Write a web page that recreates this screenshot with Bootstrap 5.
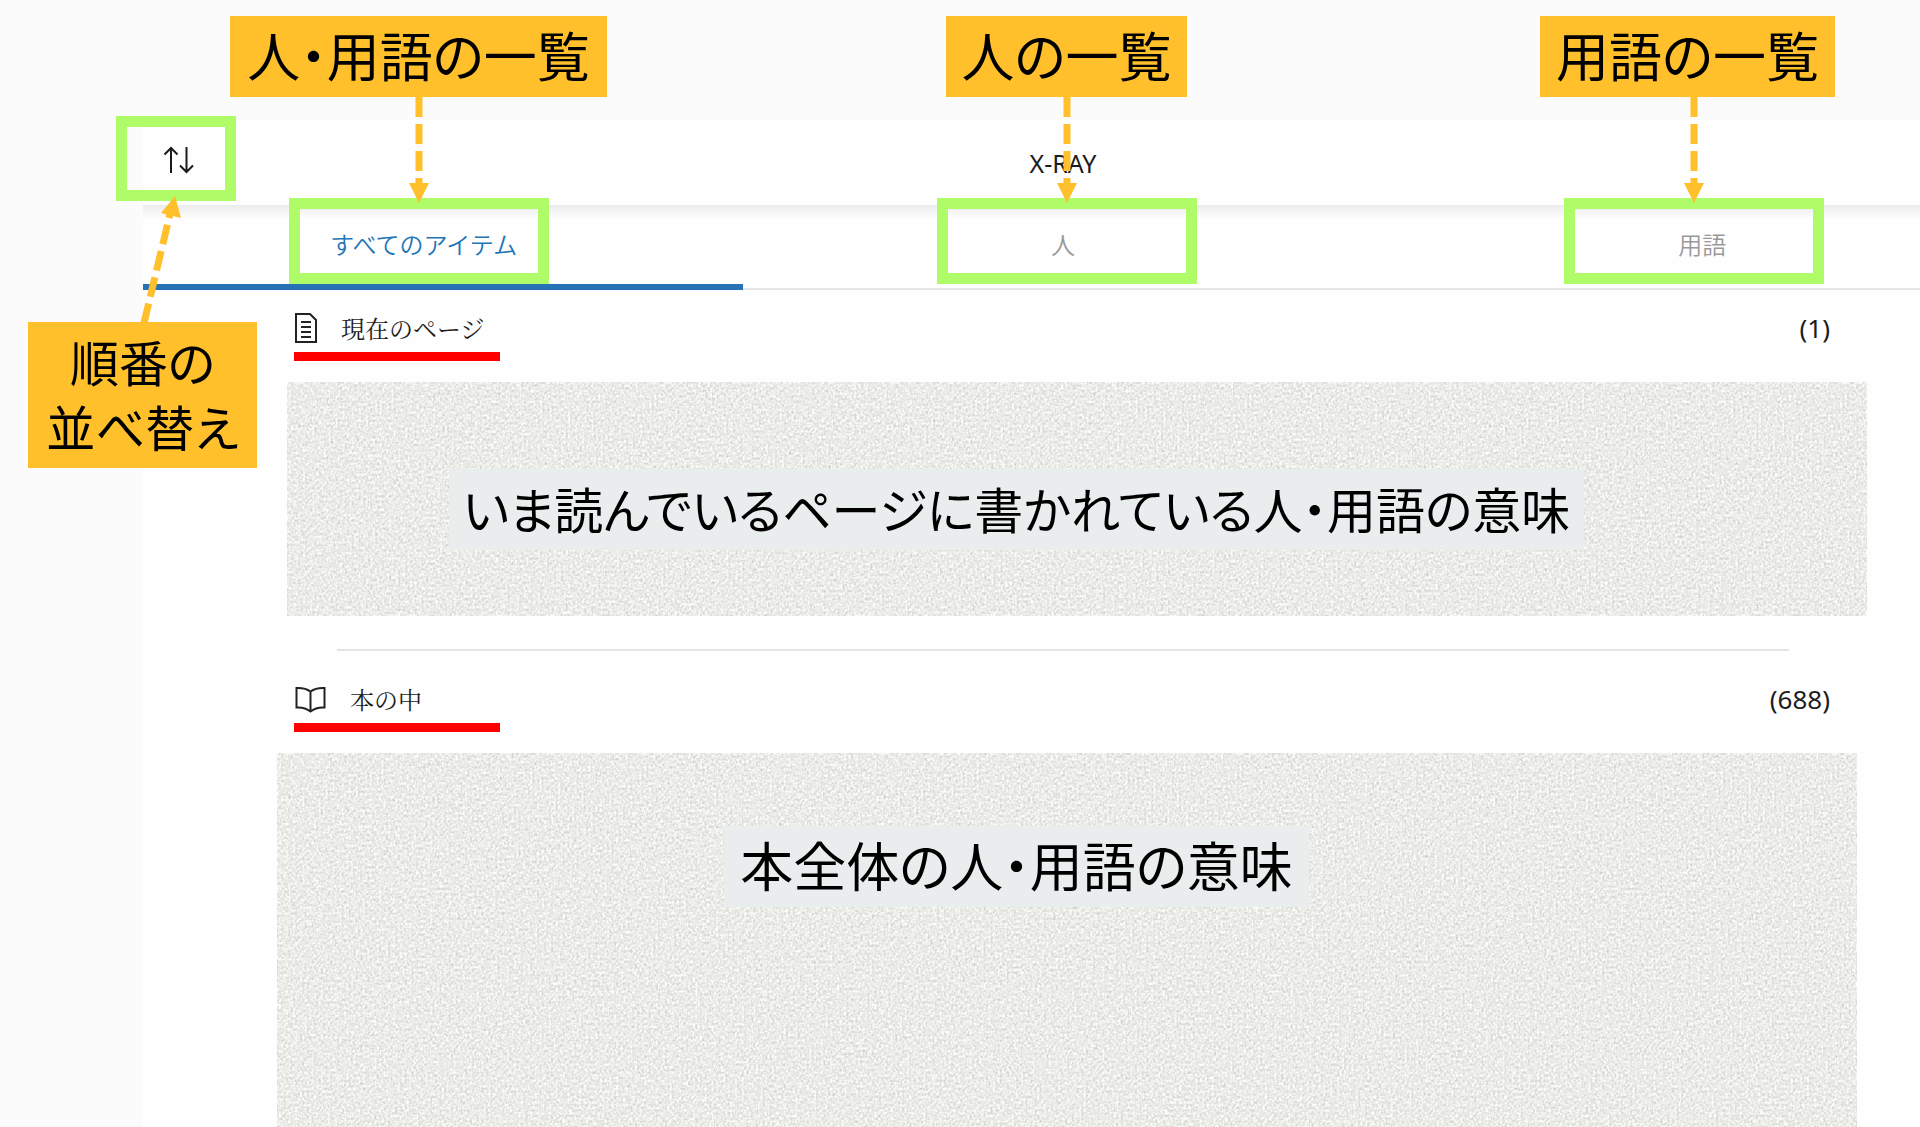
<!DOCTYPE html>
<html lang="ja">
<head>
<meta charset="utf-8">
<meta name="viewport" content="width=device-width, initial-scale=1">
<title>X-RAY</title>
<link href="https://cdn.jsdelivr.net/npm/bootstrap@5.3.0/dist/css/bootstrap.min.css" rel="stylesheet">
<script src="https://cdn.jsdelivr.net/npm/bootstrap@5.3.0/dist/js/bootstrap.bundle.min.js"></script>
<style>
  body { background: #fbfbfb; color: #1c1c1c; font-family: "Noto Sans", "Noto Sans CJK JP", sans-serif; }
  .stage { min-height: 100vh; padding: 120px 0 0 143px; }
  .panel { background: #fefefe; min-height: calc(100vh - 120px); }
  /* the sheet is wider than the visible panel on both sides */
  .sheet-wide { margin-left: -39px; margin-right: -102px; }
  .topbar { height: 85px; }
  .topbar h1 { font-size: 25px; line-height: 28px; }
  .sort-btn { position: absolute; left: 17px; top: 23px; width: 36px; height: 36px; }
  .tabbar { height: 85px; border-bottom: 2px solid #e6e6e6; background: linear-gradient(#ececec, #fefefe 14px); }
  .tabbar a { height: 85px; padding-bottom: 1px; color: #999; font: 350 24px/32px "Noto Sans CJK JP", sans-serif; border-bottom: 6px solid transparent; }
  .tabbar a.active { color: #1f75b5; border-bottom-color: #2672b4; }
  .sec-head { padding: 0 90px 21px 151px; height: 92px; }
  .title-row { height: 40px; margin-bottom: 4px; padding-left: 1px; }
  .title-row h2 { font: 400 24px/32px "Noto Serif CJK JP", "Noto Serif CJK SC", "Noto Sans CJK JP", serif; }
  .title-row span { font-size: 26px; line-height: 32px; }
  .redline { width: 206px; height: 9px; background: #f00; }
  .grain { position: relative; overflow: hidden; background: #eff0ec; }
  .grain > svg { position: absolute; inset: 0; width: 100%; height: 100%; }
  .grain-a { margin: 0 53px 0 144px; height: 234px; padding: 87px 0 0 162px; }
  .grain-b { margin: 0 63px 0 134px; height: 376px; padding: 73px 0 0 447px; }
  .rule { margin: 33px 131px 0 194px; height: 2px; background: #e4e4e4; }
  .sec-book { padding-top: 10px; }
  .big { font: 400 53px/65px "Noto Sans CJK JP", sans-serif; font-feature-settings: "palt"; color: #000; white-space: nowrap; padding: 6px 0 10px; text-align: center; }
  .big-compact { font-size: 49px; }
  .strip { position: relative; background: #e9edee; }
  .strip-a { width: 1135px; }
  .strip-b { width: 585px; }
  .notes { position: absolute; inset: 0; pointer-events: none; }
  .note { position: absolute; background: #ffc02b; top: 16px; }
  .note-all { left: 230px; width: 377px; }
  .note-people { left: 946px; width: 241px; }
  .note-terms { left: 1540px; width: 295px; }
  .note-sort { left: 28px; top: 322px; width: 229px; }
  .ring { position: absolute; border: 11px solid #b0fb68; top: 198px; width: 260px; height: 86px; }
  .ring-sort { left: 116px; top: 116px; width: 120px; height: 85px; }
  .ring-all { left: 289px; }
  .ring-people { left: 937px; }
  .ring-terms { left: 1564px; }
  .arrows { position: absolute; left: 0; top: 0; }
</style>
</head>
<body>
<div class="stage position-relative overflow-hidden">
  <main class="panel overflow-hidden">
    <header class="topbar position-relative">
      <button type="button" class="sort-btn btn p-0 border-0 d-flex" aria-label="並べ替え">
        <svg width="36" height="36" viewBox="0 0 36 36" fill="none" stroke="#1a1a1a" stroke-width="2"><path d="M11 30V5M4.500 11.500L11 5l6.500 6.500M26.500 4v25M20 22.500l6.500 6.500 6.500-6.500"/></svg>
      </button>
      <div class="sheet-wide h-100 d-flex align-items-center justify-content-center">
        <h1 class="m-0 fw-normal">X-RAY</h1>
      </div>
    </header>
    <nav class="tabbar">
      <div class="sheet-wide d-flex">
        <a href="#" class="active d-flex flex-fill w-100 align-items-center justify-content-center text-decoration-none">すべてのアイテム</a>
        <a href="#" class="d-flex flex-fill w-100 align-items-center justify-content-center text-decoration-none">人</a>
        <a href="#" class="d-flex flex-fill w-100 align-items-center justify-content-center text-decoration-none">用語</a>
      </div>
    </nav>

    <section>
      <div class="sec-head d-flex flex-column justify-content-end">
        <div class="title-row d-flex align-items-center">
          <svg class="me-4" width="22" height="30" viewBox="0 0 22 30" fill="none" stroke="#222" stroke-width="2"><path d="M1 1h14l6 6v22H1zM6 9h10M6 14h10M6 19h10M6 24h10"/></svg>
          <h2 class="m-0">現在のページ</h2>
          <span class="ms-auto">(1)</span>
        </div>
        <div class="redline"></div>
      </div>
      <div class="grain grain-a">
        <svg aria-hidden="true"><defs><filter id="paper" x="0" y="0" width="100%" height="100%" color-interpolation-filters="sRGB"><feTurbulence type="fractalNoise" baseFrequency="0.43 0.37" numOctaves="3" seed="11"/><feColorMatrix values="0.2 0.2 0 0 0.722  0.2 0.2 0 0 0.724  0.2 0.2 0 0 0.71  0 0 0 0 1"/></filter></defs><rect width="100%" height="100%" filter="url(#paper)"/></svg>
        <div class="strip strip-a big big-compact">いま読んでいるページに書かれている人・用語の意味</div>
      </div>
    </section>

    <div class="rule"></div>

    <section class="sec-book">
      <div class="sec-head d-flex flex-column justify-content-end">
        <div class="title-row d-flex align-items-center">
          <svg class="me-4" width="31" height="27" viewBox="0 0 31 27" fill="none" stroke="#222" stroke-width="2"><path d="M15.500 5.500Q10 1.500 1.500 2v19.500Q10 21 15.500 25.500 21 21 29.500 21.500V2Q21 1.500 15.500 5.500zV25"/></svg>
          <h2 class="m-0">本の中</h2>
          <span class="ms-auto">(688)</span>
        </div>
        <div class="redline"></div>
      </div>
      <div class="grain grain-b">
        <svg aria-hidden="true"><rect width="100%" height="100%" filter="url(#paper)"/></svg>
        <div class="strip strip-b big">本全体の人・用語の意味</div>
      </div>
    </section>
  </main>

  <!-- explanatory notes laid over the screen -->
  <div class="notes">
    <div class="ring ring-sort"></div>
    <div class="ring ring-all"></div>
    <div class="ring ring-people"></div>
    <div class="ring ring-terms"></div>
    <svg class="arrows" width="1920" height="330" viewBox="0 0 1920 330" fill="#ffc02b" stroke="none">
      <g stroke="#ffc02b" stroke-width="7" stroke-dasharray="20 7"><path d="M419 97V186M1067 97V186M1694 97V186M144 323L170 214"/></g>
      <path d="M409 183h20l-10 20zM1057 183h20l-10 20zM1684 183h20l-10 20zM175 196l6 22-20-5z"/>
    </svg>
    <div class="note note-all big">人・用語の一覧</div>
    <div class="note note-people big">人の一覧</div>
    <div class="note note-terms big">用語の一覧</div>
    <div class="note note-sort big big-compact">順番の<br>並べ替え</div>
  </div>
</div>
</body>
</html>
